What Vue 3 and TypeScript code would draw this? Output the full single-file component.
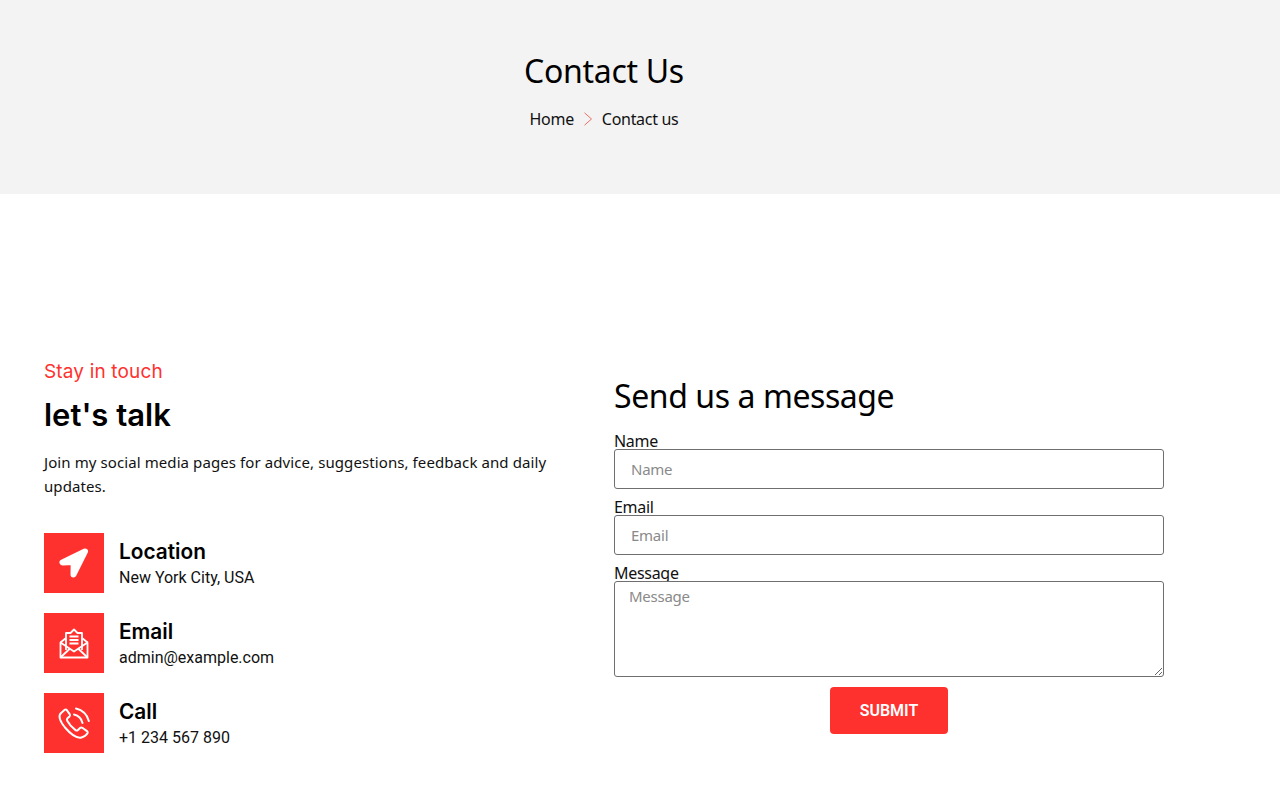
<template>
  <div class="page">
    <header class="hero">
      <div class="hero-inner">
        <h1>Contact Us</h1>
        <nav class="crumbs">
          <a>Home</a>
          <svg class="chev" width="10" height="14" viewBox="0 0 10 14"><path d="M1.5 .8 8.5 7l-7 6.2" fill="none" stroke="#ec6f64" stroke-width="1" /></svg>
          <a>Contact us</a>
        </nav>
      </div>
    </header>

    <section class="contact">
      <div class="info">
        <p class="eyebrow">Stay in touch</p>
        <h2>let's talk</h2>
        <p class="lead">Join my social media pages for advice, suggestions, feedback and daily updates.</p>

        <ul class="rows">
          <li v-for="row in rows" :key="row.title" class="row">
            <span class="icon">
              <svg v-if="row.icon === 'location'" width="60" height="60" viewBox="0 0 60 60">
                <path d="M41 18.500 18.500 29.500 29.700 29 29.500 41.500Z" fill="#fff" stroke="#fff" stroke-width="6" stroke-linejoin="round" />
              </svg>
              <svg v-else-if="row.icon === 'mail'" width="60" height="60" viewBox="0 0 60 60" fill="none" stroke="#fff" stroke-width="1.800" stroke-linejoin="round">
                <path d="M16.500 29.500 22 25V37M38 25 43.500 29.500M22 25V20H26.500L30 16.500 33.500 20H38V37" />
                <path d="M16.500 29.500V44.500H43.500V29.500L30 38.500Z" />
                <path d="M16.500 44.500 26 35.500M43.500 44.500 34 35.500" />
                <path d="M25.500 23.500H34.500M25.500 27H34.500M25.500 30.500H34.500" />
              </svg>
              <svg v-else width="60" height="60" viewBox="0 0 60 60" fill="none" stroke="#fff" stroke-width="2" stroke-linecap="round" stroke-linejoin="round">
                <path d="M20.500 17 16.800 20.200C14.500 22.500 15.500 27.500 21 34.500 27 41.500 33 45.500 37.500 44.500 40 44 42.500 41.800 43.500 40.300 44 39.500 43.800 38.700 43 38.100L38.300 34.800C37.500 34.300 36.700 34.400 36 35L34 37C33.300 37.700 32.400 37.700 31.500 37.100 28 34.500 25 31 23.200 27.700 22.700 26.800 22.800 26 23.500 25.300L25.500 23.400C26.100 22.800 26.200 22 25.800 21.300L22.800 17.200C22.200 16.400 21.300 16.300 20.500 17Z" />
                <path d="M30 21.500C34.500 22.500 37.500 25.500 38.500 30" />
                <path d="M32 15.500C38.500 17 43 21.500 44.800 28" />
              </svg>
            </span>
            <div class="row-text">
              <h3>{{ row.title }}</h3>
              <p>{{ row.text }}</p>
            </div>
          </li>
        </ul>
      </div>

      <form class="form" @submit.prevent>
        <h2 class="form-title">Send us a message</h2>
        <label for="name">Name</label>
        <input id="name" type="text" placeholder="Name" />
        <label for="email">Email</label>
        <input id="email" type="email" placeholder="Email" />
        <label for="message">Message</label>
        <textarea id="message" placeholder="Message"></textarea>
        <button type="submit">SUBMIT</button>
      </form>
    </section>
  </div>
</template>

<script setup lang="ts">
interface ContactRow {
  icon: 'location' | 'mail' | 'phone';
  title: string;
  text: string;
}

const rows: ContactRow[] = [
  { icon: 'location', title: 'Location', text: 'New York City, USA' },
  { icon: 'mail', title: 'Email', text: 'admin@example.com' },
  { icon: 'phone', title: 'Call', text: '+1 234 567 890' },
];
</script>

<style>
body {
  background: #fff;
}
</style>

<style scoped>
.page {
  height: 796px;
  overflow: hidden;
  font-family: 'Noto Sans', 'Open Sans', sans-serif;
  color: #000;
}

.hero {
  height: 194px;
  background: #f3f3f3;
  padding-left: 44px;
  box-sizing: border-box;
}

.hero-inner {
  width: 1120px;
  padding-top: 49px;
  text-align: center;
}

.hero h1 {
  margin: 0;
  font-size: 32px;
  line-height: 44px;
  font-weight: 400;
  letter-spacing: -0.3px;
}

.crumbs {
  display: flex;
  justify-content: center;
  align-items: center;
  gap: 9px;
  margin-top: 15px;
  font-size: 16px;
  line-height: 22px;
  color: #111;
  letter-spacing: -0.3px;
}

.contact {
  display: flex;
  padding-left: 44px;
}

.info {
  width: 570px;
  box-sizing: border-box;
  padding-top: 165px;
  padding-right: 20px;
}

.eyebrow {
  margin: 0;
  font-family: Inter, sans-serif;
  font-size: 19px;
  line-height: 26px;
  letter-spacing: 0.15px;
  color: #ff312e;
}

.info h2 {
  margin: 8px 0 0;
  font-family: Inter, sans-serif;
  font-size: 31px;
  line-height: 44px;
  font-weight: 600;
}

.lead {
  margin: 13px 0 0;
  font-size: 15px;
  line-height: 24px;
  color: #111;
  letter-spacing: 0.09px;
}

.rows {
  list-style: none;
  margin: 35px 0 0;
  padding: 0;
  display: flex;
  flex-direction: column;
  gap: 20px;
}

.row {
  display: flex;
  gap: 15px;
  align-items: center;
  height: 60px;
}

.icon {
  display: block;
  width: 60px;
  height: 60px;
  background: #ff312e;
}

.icon svg {
  display: block;
}

.row-text h3 {
  margin: 1px 0 0;
  font-family: Inter, sans-serif;
  font-size: 20.800px;
  line-height: 28px;
  font-weight: 600;
}

.row-text p {
  margin: 0;
  font-family: Roboto, sans-serif;
  font-size: 16px;
  line-height: 24px;
  color: #111;
}

.form {
  width: 550px;
  padding-top: 178px;
  display: flex;
  flex-direction: column;
}

.form-title {
  margin: 0;
  font-size: 32px;
  line-height: 48px;
  font-weight: 400;
  letter-spacing: -0.42px;
}

.form label {
  font-size: 16px;
  line-height: 16px;
  margin-top: 10px;
  color: #111;
  letter-spacing: -0.3px;
}

.form-title + label {
  margin-top: 13px;
}

.form input,
.form textarea {
  display: block;
  box-sizing: border-box;
  width: 100%;
  border: 1px solid #6f6f6f;
  border-radius: 3px;
  font-family: inherit;
  font-size: 15px;
  letter-spacing: -0.25px;
  background: #fff;
  outline: none;
}

.form input {
  height: 40px;
  padding: 0 16px 1px;
}

.form textarea {
  height: 96px;
  padding: 4px 14px;
  resize: vertical;
}

.form input::placeholder,
.form textarea::placeholder {
  color: #8a8a8a;
}

.form button {
  align-self: center;
  width: 118px;
  height: 47px;
  margin-top: 10px;
  border: none;
  border-radius: 4px;
  background: #ff312e;
  color: #fff;
  font-family: Roboto, sans-serif;
  font-size: 16px;
  font-weight: 600;
}
</style>
